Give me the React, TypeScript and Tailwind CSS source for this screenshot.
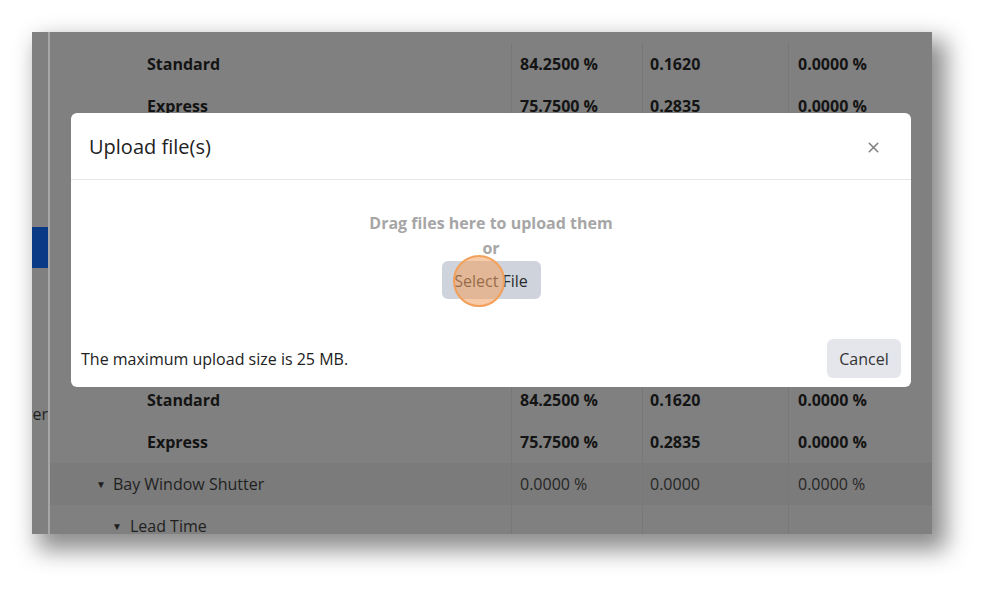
import { X } from "lucide-react";

type Row = {
  label: string;
  level: "bold" | "group" | "sub" | "blank";
  values: [string, string, string];
  band?: boolean;
};

const rows: Row[] = [
  { label: "Standard", level: "bold", values: ["84.2500 %", "0.1620", "0.0000 %"] },
  { label: "Express", level: "bold", values: ["75.7500 %", "0.2835", "0.0000 %"] },
  { label: "", level: "blank", values: ["", "", ""] },
  { label: "", level: "blank", values: ["", "", ""] },
  { label: "", level: "blank", values: ["", "", ""] },
  { label: "", level: "blank", values: ["", "", ""] },
  { label: "", level: "blank", values: ["", "", ""] },
  { label: "", level: "blank", values: ["", "", ""] },
  { label: "Standard", level: "bold", values: ["84.2500 %", "0.1620", "0.0000 %"] },
  { label: "Express", level: "bold", values: ["75.7500 %", "0.2835", "0.0000 %"] },
  { label: "Bay Window Shutter", level: "group", values: ["0.0000 %", "0.0000", "0.0000 %"], band: true },
  { label: "Lead Time", level: "sub", values: ["", "", ""] },
];

function TableRow({ row }: { row: Row }) {
  const bold = row.level === "bold";
  const cell = bold ? "font-bold text-[#141414]" : "text-[#262626]";
  return (
    <div className={`flex h-[42px] ${row.band ? "bg-[#7b7b7b]" : ""}`}>
      <div className="w-[461px] flex items-center">
        {row.level === "bold" && <span className="pl-[97px] font-bold text-[#141414]">{row.label}</span>}
        {row.level === "group" && (
          <span className="pl-[46px] flex items-center gap-[7px] text-[#1f1f1f]">
            <span className="text-[10px]">▼</span>
            {row.label}
          </span>
        )}
        {row.level === "sub" && (
          <span className="pl-[62px] flex items-center gap-[8px] text-[#1f1f1f]">
            <span className="text-[10px]">▼</span>
            {row.label}
          </span>
        )}
      </div>
      <div className={`w-[131px] border-l border-[#787878] pl-[8px] flex items-center ${cell}`}>{row.values[0]}</div>
      <div className={`w-[146px] border-l border-[#787878] pl-[7px] flex items-center ${cell}`}>{row.values[1]}</div>
      <div className={`w-[130px] border-l border-[#787878] pl-[9px] flex items-center ${cell}`}>{row.values[2]}</div>
    </div>
  );
}

export default function App() {
  return (
    <div className="relative w-[997px] h-[599px] bg-white overflow-hidden pl-[32px] pt-[32px] font-['Open_Sans',sans-serif] text-[16px]">
      {/* dimmed page behind the dialog */}
      <div className="w-[900px] h-[502px] bg-[#808080] flex overflow-hidden shadow-[10px_12px_22px_4px_rgba(0,0,0,0.45)]">
        <div className="w-[16px] flex flex-col shrink-0">
          <div className="mt-[195px] h-[41px] bg-[#0a3a86]" />
          <div className="mt-[134px] flex justify-end overflow-hidden whitespace-nowrap text-[#1f1f1f]">
            Explorer
          </div>
        </div>
        <div className="w-[2px] bg-[#a6a6a6] shrink-0" />
        <div className="flex-1 pt-[11px]">
          {rows.map((row, i) => (
            <TableRow key={i} row={row} />
          ))}
        </div>
      </div>

      {/* dialog */}
      <div className="absolute left-[71px] top-[113px] w-[840px] h-[274px] bg-white rounded-[6px] flex flex-col">
        <div className="h-[67px] flex items-center justify-between pl-[18px] pr-[29px] pt-[2px] border-b border-[#e6e6e6]">
          <h2 className="text-[20px] text-[#222]">Upload file(s)</h2>
          <X size={17} strokeWidth={2.2} className="text-[#808080]" />
        </div>
        <div className="flex-1 flex flex-col items-center pt-[32px]">
          <div className="font-bold text-[#a6a6a6] leading-[22px]">Drag files here to upload them</div>
          <div className="font-bold text-[#a6a6a6] leading-[22px] mt-[3px]">or</div>
          <div className="relative mt-[2px]">
            <button className="h-[38px] w-[99px] pt-[1px] rounded-[6px] bg-[#cfd3dc] text-[#2b2b2b]">Select File</button>
            <span className="absolute left-[11px] top-[-6px] w-[52px] h-[52px] rounded-full border-2 border-[#f2a05a] bg-[#f0a060]/55" />
          </div>
        </div>
        <div className="flex items-center justify-between pl-[10px] pr-[10px] pb-[9px]">
          <span className="text-[#222]">The maximum upload size is 25 MB.</span>
          <button className="h-[39px] w-[74px] rounded-[6px] bg-[#e4e6eb] text-[#333]">Cancel</button>
        </div>
      </div>
    </div>
  );
}
